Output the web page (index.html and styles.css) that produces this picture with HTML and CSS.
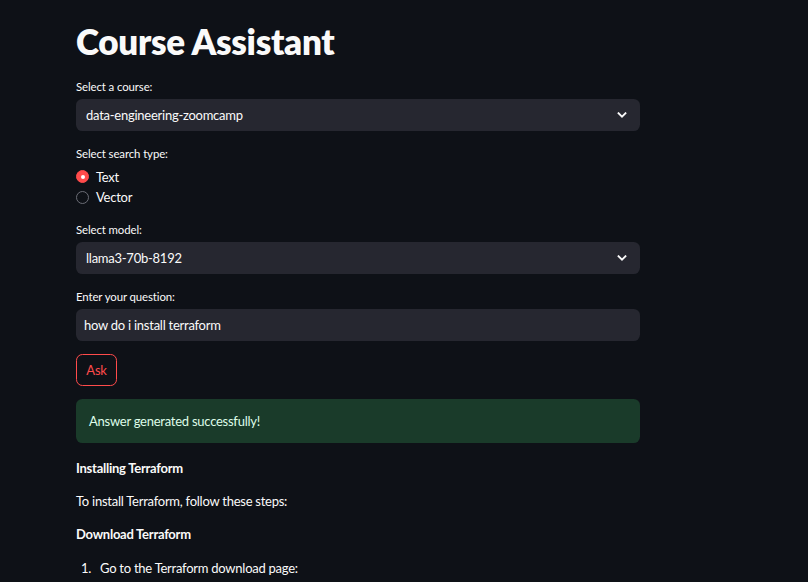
FILE: index.html
```html
<!DOCTYPE html>
<html lang="en">
<head>
<meta charset="utf-8">
<title>Course Assistant</title>
<link rel="stylesheet" href="styles.css">
</head>
<body>
<main class="main">
  <h1 class="title">Course Assistant</h1>

  <div class="widget">
    <label class="label">Select a course:</label>
    <div class="select">
      <span>data-engineering-zoomcamp</span>
      <svg class="chev" width="10" height="6" viewBox="0 0 10 6"><path d="M1.5 1.2l3.5 3.5 3.5-3.5" fill="none" stroke="#fafafa" stroke-width="1.8" stroke-linecap="square"/></svg>
    </div>
  </div>

  <div class="widget">
    <label class="label">Select search type:</label>
    <div class="radios">
      <div class="radio"><span class="dot on"></span><span>Text</span></div>
      <div class="radio"><span class="dot"></span><span>Vector</span></div>
    </div>
  </div>

  <div class="widget">
    <label class="label">Select model:</label>
    <div class="select">
      <span>llama3-70b-8192</span>
      <svg class="chev" width="10" height="6" viewBox="0 0 10 6"><path d="M1.5 1.2l3.5 3.5 3.5-3.5" fill="none" stroke="#fafafa" stroke-width="1.8" stroke-linecap="square"/></svg>
    </div>
  </div>

  <div class="widget">
    <label class="label">Enter your question:</label>
    <div class="input">how do i install terraform</div>
  </div>

  <div class="widget">
    <button class="btn">Ask</button>
  </div>

  <div class="success">Answer generated successfully!</div>

  <div class="md">
    <p><strong>Installing Terraform</strong></p>
    <p>To install Terraform, follow these steps:</p>
    <p><strong>Download Terraform</strong></p>
    <ol class="steps">
      <li><span class="num">1.</span><span>Go to the Terraform download page:</span></li>
    </ol>
  </div>
</main>
</body>
</html>
```

FILE: styles.css
```css
html, body {
  margin: 0;
  padding: 0;
  background: #0e1117;
  height: 100%;
  overflow: hidden;
}
body {
  font-family: Lato, "Open Sans", sans-serif;
  color: #fafafa;
  font-size: 13px;
  letter-spacing: -0.25px;
}
.main {
  width: 564px;
  margin-left: 76px;
  padding-top: 20px;
  display: flex;
  flex-direction: column;
  gap: 12.8px;
}
.title {
  margin: 0 0 2px 0;
  font-size: 35px;
  line-height: 42px;
  font-weight: 800;
  letter-spacing: -0.3px;
}
.widget {
  display: flex;
  flex-direction: column;
}
.label {
  font-size: 11.4px;
  line-height: 19.2px;
  margin-bottom: 3.2px;
  letter-spacing: -0.1px;
}
.select {
  height: 32px;
  background: #262730;
  border-radius: 6.4px;
  display: flex;
  align-items: center;
  justify-content: space-between;
  padding: 0 13px 0 10px;
}
.chev { display: block; }
.radios {
  display: flex;
  flex-direction: column;
  gap: 1.6px;
  margin-top: 0.6px;
}
.radio {
  display: flex;
  align-items: center;
  gap: 7px;
  height: 19.2px;
}
.dot {
  width: 11px;
  height: 11px;
  border-radius: 50%;
  border: 1px solid #6b6d76;
  box-sizing: content-box;
}
.dot.on {
  background: #ff4b4b;
  border-color: #ff4b4b;
  position: relative;
}
.dot.on::after {
  content: "";
  position: absolute;
  left: 3.5px;
  top: 3.5px;
  width: 4px;
  height: 4px;
  border-radius: 50%;
  background: #fff;
}
.input {
  height: 32px;
  background: #262730;
  border-radius: 6.4px;
  display: flex;
  align-items: center;
  padding: 0 8px;
}
.btn {
  align-self: flex-start;
  height: 32px;
  width: 41px;
  background: transparent;
  border: 1px solid #ff4b4b;
  border-radius: 6.4px;
  color: #ff4b4b;
  font-family: inherit;
  font-size: 13px;
  letter-spacing: -0.25px;
  padding: 0;
}
.success {
  background: #1a3b2a;
  color: #dffde9;
  border-radius: 6.4px;
  padding: 0 13px;
  height: 44px;
  display: flex;
  align-items: center;
}
.md {
  margin-top: 2px;
}
.md p {
  margin: 0 0 12.8px 0;
  line-height: 20.5px;
}
.md strong { font-weight: 700; }
.steps {
  margin: 0;
  padding: 0;
  list-style: none;
  line-height: 20.5px;
}
.steps li {
  display: flex;
}
.num {
  width: 24px;
  padding-left: 5px;
  box-sizing: border-box;
  flex: none;
}
```
